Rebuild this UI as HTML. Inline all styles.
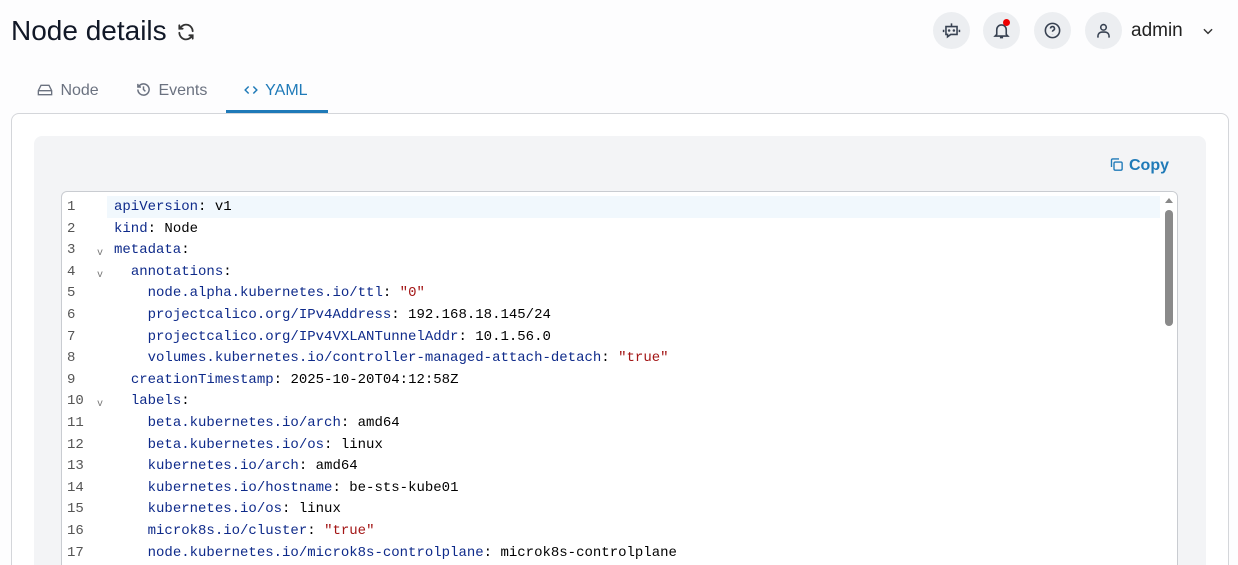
<!DOCTYPE html>
<html><head><meta charset="utf-8"><style>
*{box-sizing:border-box;margin:0;padding:0}
html,body{width:1238px;height:565px;overflow:hidden}
body{background:#fdfdfe;font-family:"Liberation Sans",sans-serif;position:relative}
.title{position:absolute;left:11px;top:15px;font-size:28px;color:#111827}
.tabs{position:absolute;left:37px;top:82px;font-size:16px;color:#6b7280}
.tab{position:absolute;top:0;white-space:nowrap}
.circ{position:absolute;top:12px;width:37px;height:37px;border-radius:50%;background:#eceef1}
.circ svg{position:absolute;left:9px;top:9px}
.card{position:absolute;left:11px;top:113px;width:1218px;height:470px;border:1px solid #d4d6da;border-radius:8px;background:#fff}
.inner{position:absolute;left:34px;top:136px;width:1172px;height:440px;background:#f3f4f6;border-radius:8px}
.editor{position:absolute;left:61px;top:191px;width:1117px;height:400px;border:1px solid #c9ccd1;border-radius:6px;background:#fff;overflow:hidden}
.code{position:absolute;left:0;top:5px;font-family:"Liberation Mono",monospace;font-size:14px;line-height:21.6px}
.ln{position:absolute;left:5px;color:#555;width:30px}
.tx{position:absolute;left:52px;white-space:pre;color:#000}
.k{color:#0e2a8a}.s{color:#a31515}
.fold{position:absolute;left:35px;color:#777;font-size:10px;margin-top:3px}
</style></head><body>
<div class="title">Node details <svg width="20" height="20" viewBox="0 0 24 24" style="vertical-align:-2px;margin-left:2px" fill="none" stroke="#333" stroke-width="2.2" stroke-linecap="round"><path d="M20 11a8 8 0 0 0-14.5-4.5M4 4v4h4M4 13a8 8 0 0 0 14.5 4.5M20 20v-4h-4"/></svg></div>

<div class="circ" style="left:933px"><svg width="19" height="19" viewBox="0 0 24 24" fill="none" stroke="#374151" stroke-width="2"><path d="M12 3v4M5 7h14v10h-8l-4 3v-3H5zM2 11v3M22 11v3"/><circle cx="9" cy="12" r=".6" fill="#374151"/><circle cx="15" cy="12" r=".6" fill="#374151"/></svg></div>
<div class="circ" style="left:983px"><svg width="19" height="19" viewBox="0 0 24 24" fill="none" stroke="#374151" stroke-width="2"><path d="M6 17V11a6 6 0 0 1 12 0v6l2 2H4zM10 21h4"/></svg><div style="position:absolute;left:20px;top:7px;width:7px;height:7px;border-radius:50%;background:#e00"></div></div>
<div class="circ" style="left:1034px"><svg width="19" height="19" viewBox="0 0 24 24" fill="none" stroke="#374151" stroke-width="2"><circle cx="12" cy="12" r="9"/><path d="M9.5 9.5a2.5 2.5 0 1 1 3.5 2.3c-.7.4-1 1-1 1.7M12 17v.2"/></svg></div>
<div class="circ" style="left:1085px"><svg width="19" height="19" viewBox="0 0 24 24" fill="none" stroke="#374151" stroke-width="2"><circle cx="12" cy="8" r="3.5"/><path d="M5 21v-2a5 5 0 0 1 5-5h4a5 5 0 0 1 5 5v2"/></svg></div>
<div style="position:absolute;left:1131px;top:20px;font-size:19px;color:#222">admin</div>
<svg style="position:absolute;left:1201px;top:24px" width="14" height="14" viewBox="0 0 24 24" fill="none" stroke="#333" stroke-width="2.5"><path d="M5 9l7 7 7-7"/></svg>

<div class="tabs">
<div class="tab" style="left:0"><svg width="16" height="14" viewBox="0 0 24 20" fill="none" stroke="#6b7280" stroke-width="2" style="vertical-align:-2px;margin-right:3px"><path d="M2 11l4-8h12l4 8v6H2zM2 11h20"/></svg> Node</div>
<div class="tab" style="left:99px"><svg width="15" height="15" viewBox="0 0 24 24" fill="none" stroke="#6b7280" stroke-width="2.4" style="vertical-align:-2px;margin-right:3px"><path d="M3 12a9 9 0 1 0 3-6.7L3 8M3 3v5h5M12 7v5l3 3"/></svg> Events</div>
<div class="tab" style="left:207px;color:#1f7ab8"><svg width="14" height="14" viewBox="0 0 24 24" fill="none" stroke="#1f7ab8" stroke-width="2.5" style="vertical-align:-2px;margin-right:3px"><path d="M8 6l-6 6 6 6M16 6l6 6-6 6"/></svg> YAML</div>
</div>
<div class="card"></div>
<div style="position:absolute;left:226px;top:110px;width:102px;height:3px;background:#1f7ab8"></div>
<div class="inner"></div>
<div style="position:absolute;left:1109px;top:157px;font-size:16px;color:#1f7ab8;font-weight:bold"><svg width="15" height="15" viewBox="0 0 24 24" fill="none" stroke="#1f7ab8" stroke-width="2.2" style="vertical-align:-2px;margin-right:5px"><rect x="8" y="8" width="13" height="13" rx="2"/><path d="M4 16V5a2 2 0 0 1 2-2h10"/></svg>Copy</div>

<div class="editor">
<div style="position:absolute;left:45px;top:4px;width:1053px;height:22px;background:#f1f8fd"></div>
<div style="position:absolute;right:0;top:0;width:16px;height:400px;background:#fff"></div>
<div style="position:absolute;right:4px;top:6px;width:0;height:0;border-left:4px solid transparent;border-right:4px solid transparent;border-bottom:5px solid #888"></div>
<div style="position:absolute;right:4px;top:18px;width:8px;height:116px;border-radius:4px;background:#8a8a8a"></div>
<div class="code">
<div class="ln" style="top:0">1</div><div class="tx" style="top:0"><span class="k">apiVersion</span>: v1</div>
<div class="ln" style="top:21.6px">2</div><div class="tx" style="top:21.6px"><span class="k">kind</span>: Node</div>
<div class="ln" style="top:43.2px">3</div><div class="fold" style="top:43.2px">v</div><div class="tx" style="top:43.2px"><span class="k">metadata</span>:</div>
<div class="ln" style="top:64.8px">4</div><div class="fold" style="top:64.8px">v</div><div class="tx" style="top:64.8px">  <span class="k">annotations</span>:</div>
<div class="ln" style="top:86.4px">5</div><div class="tx" style="top:86.4px">    <span class="k">node.alpha.kubernetes.io/ttl</span>: <span class="s">"0"</span></div>
<div class="ln" style="top:108px">6</div><div class="tx" style="top:108px">    <span class="k">projectcalico.org/IPv4Address</span>: 192.168.18.145/24</div>
<div class="ln" style="top:129.6px">7</div><div class="tx" style="top:129.6px">    <span class="k">projectcalico.org/IPv4VXLANTunnelAddr</span>: 10.1.56.0</div>
<div class="ln" style="top:151.2px">8</div><div class="tx" style="top:151.2px">    <span class="k">volumes.kubernetes.io/controller-managed-attach-detach</span>: <span class="s">"true"</span></div>
<div class="ln" style="top:172.8px">9</div><div class="tx" style="top:172.8px">  <span class="k">creationTimestamp</span>: 2025-10-20T04:12:58Z</div>
<div class="ln" style="top:194.4px">10</div><div class="fold" style="top:194.4px">v</div><div class="tx" style="top:194.4px">  <span class="k">labels</span>:</div>
<div class="ln" style="top:216px">11</div><div class="tx" style="top:216px">    <span class="k">beta.kubernetes.io/arch</span>: amd64</div>
<div class="ln" style="top:237.6px">12</div><div class="tx" style="top:237.6px">    <span class="k">beta.kubernetes.io/os</span>: linux</div>
<div class="ln" style="top:259.2px">13</div><div class="tx" style="top:259.2px">    <span class="k">kubernetes.io/arch</span>: amd64</div>
<div class="ln" style="top:280.8px">14</div><div class="tx" style="top:280.8px">    <span class="k">kubernetes.io/hostname</span>: be-sts-kube01</div>
<div class="ln" style="top:302.4px">15</div><div class="tx" style="top:302.4px">    <span class="k">kubernetes.io/os</span>: linux</div>
<div class="ln" style="top:324px">16</div><div class="tx" style="top:324px">    <span class="k">microk8s.io/cluster</span>: <span class="s">"true"</span></div>
<div class="ln" style="top:345.6px">17</div><div class="tx" style="top:345.6px">    <span class="k">node.kubernetes.io/microk8s-controlplane</span>: microk8s-controlplane</div>
</div>
</div>
</body></html>
